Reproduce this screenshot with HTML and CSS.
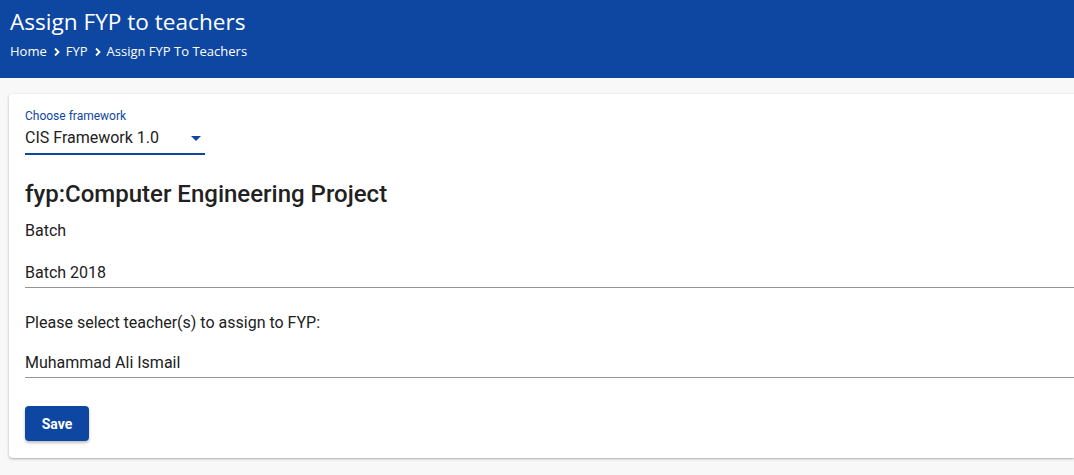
FILE: index.html
```html
<!DOCTYPE html>
<html>
<head>
<meta charset="utf-8">
<link rel="stylesheet" href="styles.css">
</head>
<body>
<header class="topbar">
  <h1 class="page-title">Assign FYP to teachers</h1>
  <nav class="crumbs">
    <span>Home</span>
    <svg class="chev" viewBox="0 0 8 10" width="8" height="10"><path d="M2 1.5 L5.5 5 L2 8.5" fill="none" stroke="#fff" stroke-width="1.8"/></svg>
    <span>FYP</span>
    <svg class="chev" viewBox="0 0 8 10" width="8" height="10"><path d="M2 1.5 L5.5 5 L2 8.5" fill="none" stroke="#fff" stroke-width="1.8"/></svg>
    <span>Assign FYP To Teachers</span>
  </nav>
</header>
<main class="page">
  <section class="card">
    <div class="select-field">
      <div class="select-label">Choose framework</div>
      <div class="select-row">
        <span>CIS Framework 1.0</span>
        <svg class="caret" viewBox="0 0 10 5" width="10" height="5"><path d="M0 0 L10 0 L5 5 Z" fill="#0d47a1"/></svg>
      </div>
    </div>
    <h2 class="fyp-title">fyp:Computer Engineering Project</h2>
    <div class="field-label batch-label">Batch</div>
    <div class="line-field batch-value">Batch 2018</div>
    <div class="field-label teacher-label">Please select teacher(s) to assign to FYP:</div>
    <div class="line-field teacher-value">Muhammad Ali Ismail</div>
    <button class="save-btn">Save</button>
  </section>
</main>
</body>
</html>
```
FILE: styles.css
```css
html, body {
  margin: 0;
  padding: 0;
}
body {
  background: #f8f8f8;
  font-family: Roboto, "Liberation Sans", sans-serif;
  color: #212121;
  width: 1074px;
  height: 475px;
  overflow: hidden;
}
.topbar {
  background: #0d47a1;
  color: #fff;
  height: 78px;
  box-sizing: border-box;
  padding: 7px 0 0 10px;
  font-family: "Open Sans", "Noto Sans", sans-serif;
}
.page-title {
  margin: 0;
  font-weight: 400;
  font-size: 22.6px;
  line-height: 30px;
}
.crumbs {
  display: flex;
  align-items: center;
  gap: 4px;
  font-size: 13px;
  line-height: 18px;
  margin-top: 5px;
}
.chev {
  margin: 2px 1px 0 2px;
}
.page {
  padding: 16px 0 0 9px;
}
.card {
  background: #fff;
  border-radius: 4px 0 0 4px;
  box-shadow: 0 1px 3px rgba(0,0,0,0.25), 0 1px 1px rgba(0,0,0,0.08);
  padding: 14px 0 16px 16px;
  height: 364px;
  box-sizing: border-box;
}
.select-field {
  width: 180px;
}
.select-label {
  color: #0d47a1;
  font-size: 12px;
  line-height: 16px;
}
.select-row {
  display: flex;
  align-items: center;
  justify-content: space-between;
  margin-top: 2px;
  font-size: 16px;
  line-height: 24px;
  padding: 0 0 3px 0;
  border-bottom: 2px solid #0d47a1;
}
.caret {
  margin-right: 4px;
}
.fyp-title {
  margin: 23px 0 0 0;
  font-size: 24px;
  font-weight: 500;
  line-height: 32px;
}
.field-label {
  font-size: 16px;
  line-height: 24px;
}
.line-field {
  font-size: 16px;
  line-height: 24px;
  padding-bottom: 2px;
  border-bottom: 1px solid #949494;
}
.batch-label {
  margin-top: 9px;
}
.batch-value {
  margin-top: 18px;
}
.teacher-label {
  margin-top: 23px;
}
.teacher-value {
  margin-top: 16px;
}
.save-btn {
  display: block;
  margin-top: 28px;
  background: #0d47a1;
  color: #fff;
  border: none;
  border-radius: 4px;
  width: 64px;
  height: 35px;
  font-family: Roboto, "Liberation Sans", sans-serif;
  font-weight: 700;
  font-size: 14px;
  box-shadow: 0 2px 3px rgba(0,0,0,0.25);
}
```
